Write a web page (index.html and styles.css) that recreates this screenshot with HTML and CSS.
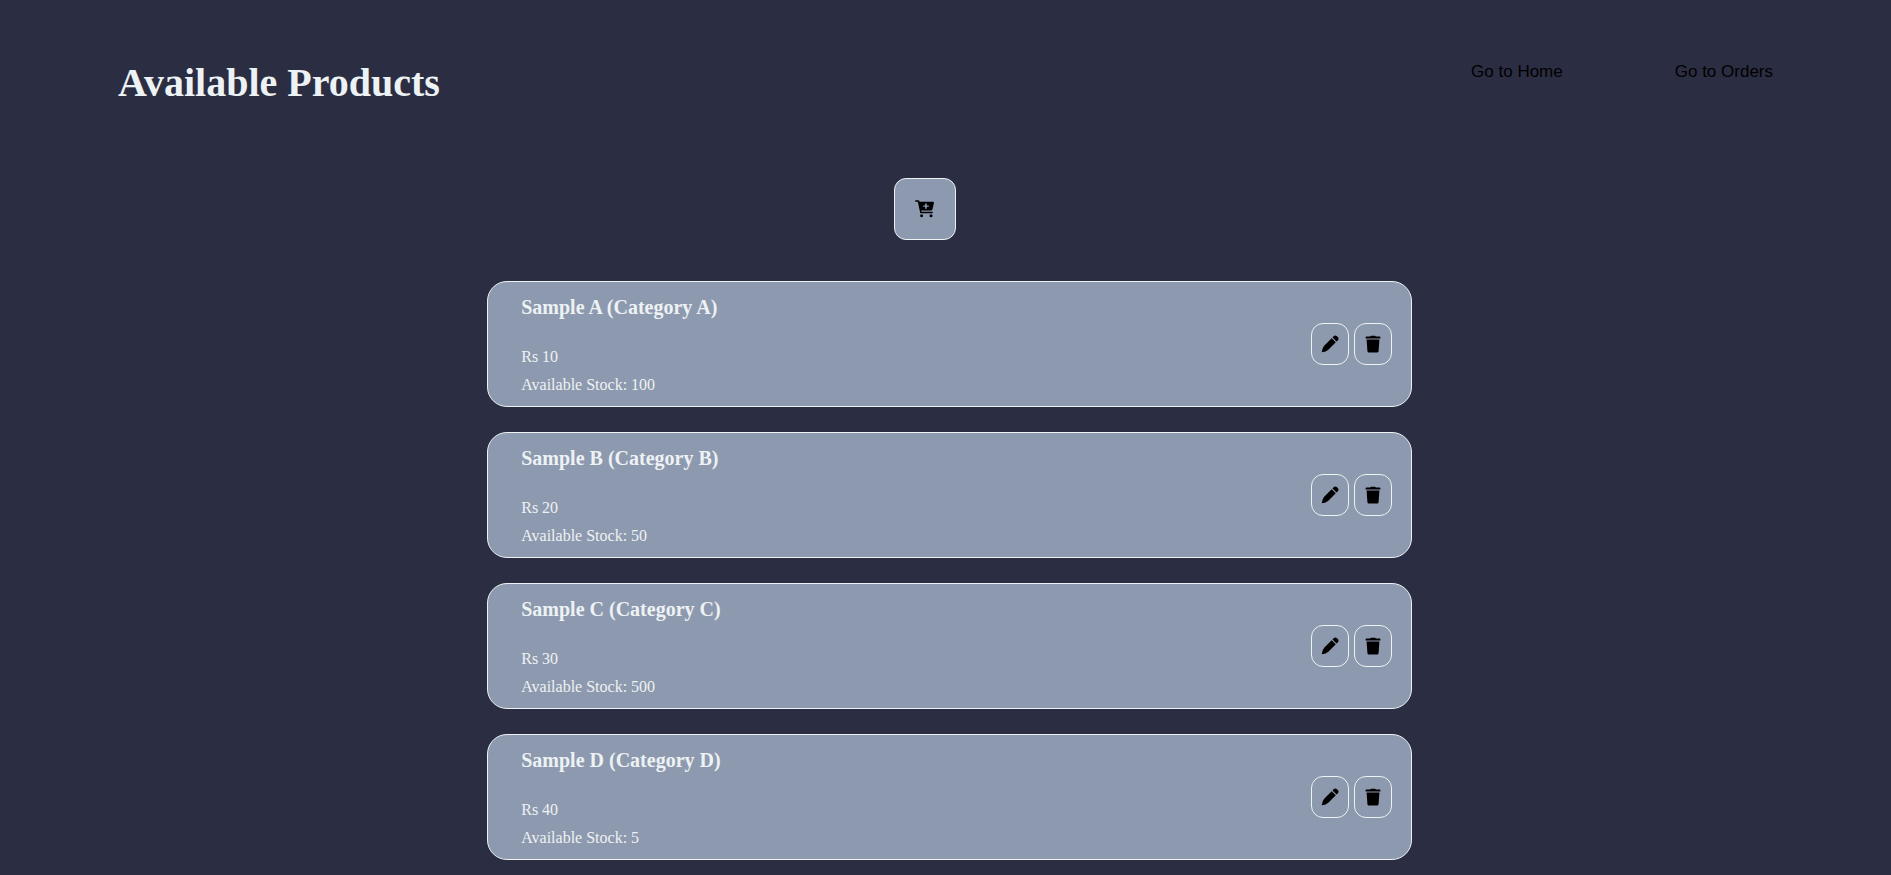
FILE: index.html
```html
<!DOCTYPE html>
<html lang="en">
<head>
<meta charset="utf-8">
<meta name="viewport" content="width=device-width, initial-scale=1">
<title>Available Products</title>
<link rel="stylesheet" href="styles.css">
</head>
<body>
<svg class="sprite" aria-hidden="true">
  <symbol id="cart" viewBox="0 0 20 18">
    <path d="M.7 1h2.800l2.400 11.600h11.300" fill="none" stroke="#000" stroke-width="1.500" stroke-linecap="round" stroke-linejoin="round"/>
    <path fill-rule="evenodd" d="M3.600 1.800H18a.9.9 0 0 1 .9 1.100l-1.400 6.300a1.600 1.600 0 0 1-1.500 1.200H5.600zM10.200 3.400v2H8.200v1.400h2v2h1.600V6.800h2V5.400h-2v-2z"/>
    <circle cx="6.600" cy="15.800" r="1.500"/><circle cx="16" cy="15.800" r="1.500"/>
  </symbol>
  <symbol id="pencil" viewBox="0 0 18 18">
    <path d="M10.700 3.200 14.800 7.300 7.300 14.800Q5.300 16.800.7 17.300 1.200 12.700 3.200 10.700z"/>
    <path d="M11.500 2.400 12.600 1.300a2.400 2.400 0 0 1 3.400 0l.7.7a2.400 2.400 0 0 1 0 3.400l-1.100 1.100z"/>
  </symbol>
  <symbol id="trash" viewBox="0 0 16 18">
    <path d="M1.400 1.600H5L6 .7h4l1 .9h3.600a.8.8 0 0 1 .8.800v1.200H.600V2.400a.8.8 0 0 1 .8-.8zM1.600 4.600h12.800l-.8 11.300a1.600 1.600 0 0 1-1.600 1.500H4a1.600 1.600 0 0 1-1.600-1.500z"/>
  </symbol>
</svg>
<header class="header">
  <h1 class="title">Available Products</h1>
  <nav class="nav">
    <a class="nav-link" href="#home">Go to Home</a>
    <a class="nav-link" href="#orders">Go to Orders</a>
  </nav>
</header>
<main class="main">
  <button class="add" type="button" aria-label="Add product"><svg class="icon-cart"><use href="#cart"/></svg></button>
  <ul class="products">
    <li class="card">
      <div class="info"><h2 class="name">Sample A (Category A)</h2><p class="line">Rs 10</p><p class="line">Available Stock: 100</p></div>
      <div class="actions">
        <button class="action" type="button" aria-label="Edit Sample A"><svg class="icon"><use href="#pencil"/></svg></button>
        <button class="action" type="button" aria-label="Delete Sample A"><svg class="icon"><use href="#trash"/></svg></button>
      </div>
    </li>
    <li class="card">
      <div class="info"><h2 class="name">Sample B (Category B)</h2><p class="line">Rs 20</p><p class="line">Available Stock: 50</p></div>
      <div class="actions">
        <button class="action" type="button" aria-label="Edit Sample B"><svg class="icon"><use href="#pencil"/></svg></button>
        <button class="action" type="button" aria-label="Delete Sample B"><svg class="icon"><use href="#trash"/></svg></button>
      </div>
    </li>
    <li class="card">
      <div class="info"><h2 class="name">Sample C (Category C)</h2><p class="line">Rs 30</p><p class="line">Available Stock: 500</p></div>
      <div class="actions">
        <button class="action" type="button" aria-label="Edit Sample C"><svg class="icon"><use href="#pencil"/></svg></button>
        <button class="action" type="button" aria-label="Delete Sample C"><svg class="icon"><use href="#trash"/></svg></button>
      </div>
    </li>
    <li class="card">
      <div class="info"><h2 class="name">Sample D (Category D)</h2><p class="line">Rs 40</p><p class="line">Available Stock: 5</p></div>
      <div class="actions">
        <button class="action" type="button" aria-label="Edit Sample D"><svg class="icon"><use href="#pencil"/></svg></button>
        <button class="action" type="button" aria-label="Delete Sample D"><svg class="icon"><use href="#trash"/></svg></button>
      </div>
    </li>
  </ul>
</main>
</body>
</html>
```
FILE: styles.css
```css
* { box-sizing: border-box; }
body {
  margin: 0;
  background: #2b2d42;
  color: #edf2f4;
  font: 16px/28px "Liberation Serif", "Times New Roman", serif;
}
.sprite { display: none; }
.header {
  display: flex;
  justify-content: space-between;
  align-items: flex-start;
  padding: 58px 118px 0;
}
.title { margin: 0; font-size: 40px; line-height: 50px; }
.nav { display: flex; gap: 112px; }
.nav-link {
  color: #000;
  font: 17px/28px "Liberation Sans", Arial, sans-serif;
  text-decoration: none;
}
.main {
  display: flex;
  flex-direction: column;
  align-items: center;
  padding: 70px 0 16px;
}
.add {
  display: flex;
  align-items: center;
  justify-content: center;
  width: 62px;
  height: 62px;
  margin-right: 42px;
  padding: 0;
  border: 1px solid #edf2f4;
  border-radius: 12px;
  background: #8d99ae;
}
.icon-cart { width: 20px; height: 18px; }
.products {
  display: flex;
  flex-direction: column;
  gap: 25px;
  width: calc(49% - 2px);
  margin: 41px 0 0 8px;
  padding: 0;
  list-style: none;
}
.card {
  display: flex;
  align-items: center;
  justify-content: space-between;
  padding: 10px 19px 7px 33px;
  border: 1px solid #edf2f4;
  border-radius: 20px;
  background: #8d99ae;
}
.name { margin: 0 0 21px; font-size: 20px; line-height: 30px; }
.line { margin: 0; }
.actions { display: flex; gap: 5px; margin-bottom: 4px; }
.action {
  display: flex;
  align-items: center;
  justify-content: center;
  width: 38px;
  height: 42px;
  padding: 0;
  border: 1px solid #edf2f4;
  border-radius: 12px;
  background: none;
}
.icon { width: 18px; height: 18px; }
```
